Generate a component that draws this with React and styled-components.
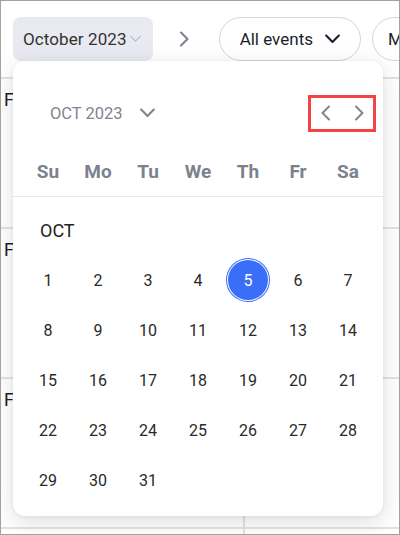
import React from 'react';
import styled, { createGlobalStyle } from 'styled-components';

const GlobalStyle = createGlobalStyle`
  html, body {
    margin: 0;
    padding: 0;
    background: #fff;
  }
  body {
    font-family: Roboto, "Liberation Sans", sans-serif;
    color: #2a2a2a;
  }
  * {
    box-sizing: border-box;
  }
`;

const weekDays = ['Su', 'Mo', 'Tu', 'We', 'Th', 'Fr', 'Sa'];

const buildWeeks = () => {
  // Oct 2023 starts on a Sunday
  const days = Array.from({ length: 31 }, (_, i) => i + 1);
  const weeks = [];
  for (let i = 0; i < days.length; i += 7) weeks.push(days.slice(i, i + 7));
  return weeks;
};

const ChevronDown = ({ size = 14, stroke = 2, color = 'currentColor' }) => (
  <svg width={size} height={size / 2 + 2} viewBox="0 0 14 9" fill="none">
    <path d="M1 1.5l6 6 6-6" stroke={color} strokeWidth={stroke} strokeLinecap="round" strokeLinejoin="round" />
  </svg>
);

const ChevronSide = ({ dir = 'right', color = '#7d8591' }) => (
  <svg width="11" height="16" viewBox="0 0 11 16" fill="none">
    <path
      d={dir === 'right' ? 'M2 1.5l6.5 6.5L2 14.5' : 'M9 1.5L2.5 8 9 14.5'}
      stroke={color}
      strokeWidth="2"
      strokeLinecap="round"
      strokeLinejoin="round"
    />
  </svg>
);

const App = () => {
  const weeks = buildWeeks();

  return (
    <>
      <GlobalStyle />
      <Frame>
        <Toolbar>
          <MonthButton>
            October 2023
            <ChevronDown size={11} stroke={1} color="#8a8d99" />
          </MonthButton>
          <NextArrow>
            <ChevronSide dir="right" color="#7a7f8a" />
          </NextArrow>
          <Pill>
            All events
            <ChevronDown size={15} stroke={2} color="#1d1d2b" />
          </Pill>
          <Pill $tight>More</Pill>
        </Toolbar>

        <Board>
          {[0, 1, 2, 3].map((r) => (
            <BoardRow key={r}>
              <BoardCell>{r < 3 ? 'Fri' : ''}</BoardCell>
              <BoardCell $divided />
            </BoardRow>
          ))}
        </Board>

        <Popup>
          <PopupHeader>
            <MonthPicker>
              OCT 2023
              <ChevronDown size={15} stroke={2} color="#7d8591" />
            </MonthPicker>
            <NavBox>
              <NavButton>
                <ChevronSide dir="left" />
              </NavButton>
              <NavButton>
                <ChevronSide dir="right" />
              </NavButton>
            </NavBox>
          </PopupHeader>

          <WeekHeader>
            {weekDays.map((d) => (
              <WeekDay key={d}>{d}</WeekDay>
            ))}
          </WeekHeader>

          <MonthLabel>OCT</MonthLabel>

          <DaysGrid>
            {weeks.flat().map((d) => (
              <DayCell key={d}>
                <Day $selected={d === 5}>{d}</Day>
              </DayCell>
            ))}
          </DaysGrid>
        </Popup>
      </Frame>
    </>
  );
};

const Frame = styled.div`
  position: relative;
  width: 400px;
  height: 535px;
  border: 1px solid #a2a2a2;
  overflow: hidden;
  background: #fff;
`;

const Toolbar = styled.div`
  display: flex;
  align-items: center;
  height: 76px;
  padding: 0 0 0 12px;
  white-space: nowrap;
  & > * {
    flex-shrink: 0;
  }
`;

const MonthButton = styled.div`
  display: flex;
  align-items: center;
  gap: 3px;
  height: 44px;
  padding: 0 12px 0 10px;
  border-radius: 8px;
  background: #e9e9f1;
  font-size: 17px;
  color: #333;
  letter-spacing: 0.1px;
`;

const NextArrow = styled.div`
  display: flex;
  align-items: center;
  width: 66px;
  height: 44px;
  padding-left: 26px;
`;

const Pill = styled.div`
  display: flex;
  align-items: center;
  gap: 12px;
  height: 44px;
  padding: 0 20px 0 ${(p) => (p.$tight ? '15px' : '20px')};
  margin-right: 11px;
  border: 1px solid #cfd6e2;
  border-radius: 22px;
  font-size: 17px;
  color: #1d1d2b;
`;

const Board = styled.div`
  display: flex;
  flex-direction: column;
`;

const BoardRow = styled.div`
  display: grid;
  grid-template-columns: 242px 1fr;
  height: 150px;
  border-top: 2px solid #e3e3e3;
  flex-shrink: 0;
`;

const BoardCell = styled.div`
  padding: 11px 0 0 3px;
  font-size: 18px;
  line-height: 20px;
  color: #1d1d2b;
  border-left: ${(p) => (p.$divided ? '2px solid #e3e3e3' : 'none')};
`;

const Popup = styled.div`
  position: absolute;
  top: 60px;
  left: 12px;
  width: 370px;
  height: 455px;
  background: #fff;
  border-radius: 12px;
  box-shadow: 0 6px 24px rgba(0, 0, 0, 0.13), 0 1px 4px rgba(0, 0, 0, 0.06);
  display: flex;
  flex-direction: column;
`;

const PopupHeader = styled.div`
  display: flex;
  align-items: center;
  justify-content: space-between;
  height: 36px;
  margin-top: 34px;
  padding: 0 7px 0 37px;
`;

const MonthPicker = styled.div`
  display: flex;
  align-items: center;
  gap: 17px;
  font-size: 16.5px;
  color: #7f8590;
`;

const NavBox = styled.div`
  display: flex;
  align-items: center;
  justify-content: space-between;
  width: 68px;
  height: 37px;
  padding: 0 8px 0 9px;
  border: 3px solid #f44343;
`;

const NavButton = styled.div`
  display: flex;
  align-items: center;
  justify-content: center;
`;

const WeekHeader = styled.div`
  display: grid;
  grid-template-columns: repeat(7, 50px);
  height: 51px;
  margin-top: 15px;
  padding: 0 10px;
  align-items: center;
  border-bottom: 1px solid #e6e6ee;
`;

const WeekDay = styled.div`
  text-align: center;
  font-size: 19px;
  font-weight: 700;
  color: #7b828c;
`;

const MonthLabel = styled.div`
  padding: 22px 0 0 27px;
  font-size: 18px;
  line-height: 24px;
  color: #222;
`;

const DaysGrid = styled.div`
  display: grid;
  grid-template-columns: repeat(7, 50px);
  grid-auto-rows: 50px;
  margin-top: 12px;
  padding: 0 10px;
`;

const DayCell = styled.div`
  display: flex;
  align-items: center;
  justify-content: center;
`;

const Day = styled.div`
  display: flex;
  align-items: center;
  justify-content: center;
  width: 40px;
  height: 40px;
  border-radius: 50%;
  font-size: 16px;
  color: ${(p) => (p.$selected ? '#fff' : '#2a2a2a')};
  background: ${(p) => (p.$selected ? '#3a6ef6' : 'transparent')};
  box-shadow: ${(p) => (p.$selected ? '0 0 0 1px #fff, 0 0 0 2px #3a6ef6' : 'none')};
`;

export default App;
